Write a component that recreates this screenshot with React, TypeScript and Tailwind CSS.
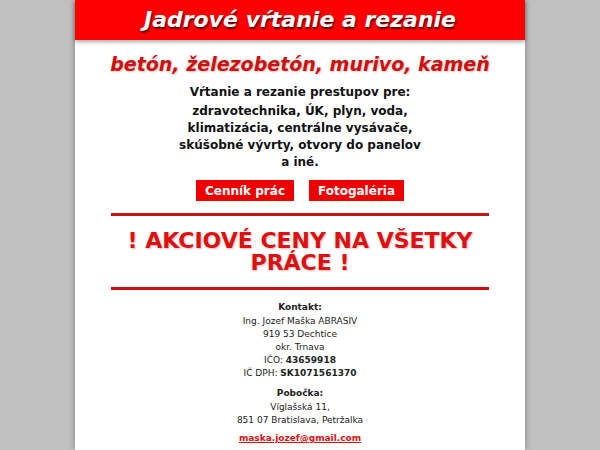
export default function App() {
  return (
    <div className="min-h-[450px] bg-[#c0c0c0] flex justify-center" style={{ fontFamily: '"DejaVu Sans", sans-serif' }}>
      <div className="w-[450px] bg-white shadow-[0_0_6px_rgba(0,0,0,0.35)] flex flex-col items-center">
        <div className="w-full h-[40px] bg-[#ff0000] flex items-center justify-center shadow-[0_2px_4px_rgba(0,0,0,0.35)]">
          <h1 className="text-white font-bold italic text-[22px] leading-none [text-shadow:1px_2px_2px_#500]">Jadrové vŕtanie a rezanie</h1>
        </div>
        <h2 className="mt-[9px] text-[#cc1111] font-bold italic text-[19px] leading-[30px] [text-shadow:1px_1px_2px_#dbb]">betón, železobetón, murivo, kameň</h2>
        <p className="mt-[5px] text-[12px] font-bold leading-[17px] text-[#111]">Vŕtanie a rezanie prestupov pre:</p>
        <p className="mt-[2px] text-[12px] font-bold leading-[17px] text-[#111] text-center w-[300px]">
          zdravotechnika, ÚK, plyn, voda,<br />klimatizácia, centrálne vysávače,<br />skúšobné vývrty, otvory do panelov<br />a iné.
        </p>
        <div className="mt-[9px] flex gap-[15px]">
          <a className="bg-[#ee0000] text-white text-[12px] font-bold h-[21px] px-[9px] flex items-center">Cenník prác</a>
          <a className="bg-[#ee0000] text-white text-[12px] font-bold h-[21px] px-[9px] flex items-center">Fotogaléria</a>
        </div>
        <div className="mt-[12px] w-[378px] h-[3px] bg-[#cc1111]" />
        <p className="mt-[14px] w-[378px] text-center text-[#dd1111] font-bold text-[22px] leading-[22px] [text-shadow:1px_1px_2px_#dbb]">! AKCIOVÉ CENY NA VŠETKY PRÁCE !</p>
        <div className="mt-[13px] w-[378px] h-[3px] bg-[#cc1111]" />
        <div className="mt-[11px] text-[9px] leading-[13px] text-[#222] text-center">
          <p className="font-bold mb-[1px]">Kontakt:</p>
          <p>Ing. Jozef Maška ABRASIV</p>
          <p>919 53 Dechtice</p>
          <p>okr. Trnava</p>
          <p>IČO: <b>43659918</b></p>
          <p>IČ DPH: <b>SK1071561370</b></p>
          <p className="font-bold mt-[7px] mb-[1px]">Pobočka:</p>
          <p>Víglašská 11,</p>
          <p>851 07 Bratislava, Petržalka</p>
          <p className="mt-[5px]"><a className="text-[#dd1111] font-bold underline">maska.jozef@gmail.com</a></p>
        </div>
      </div>
    </div>
  );
}
